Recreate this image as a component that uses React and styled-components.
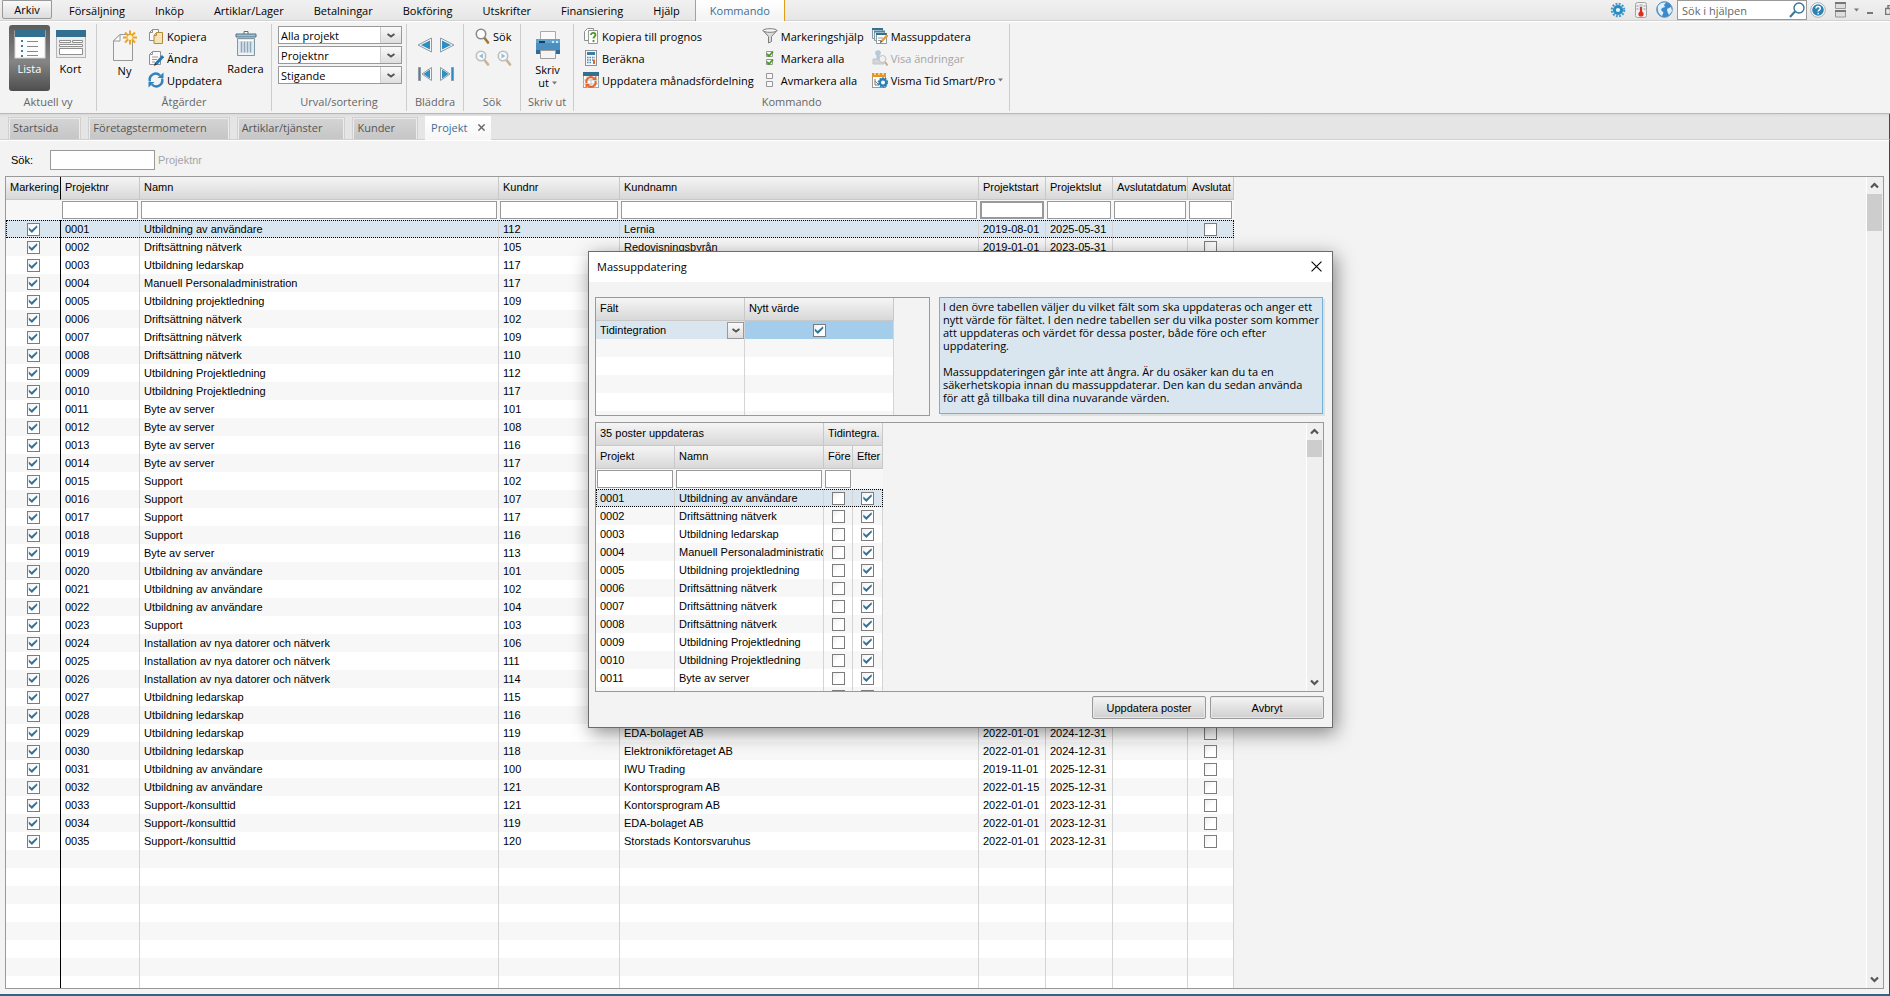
import { useState } from "react";
import styled, { createGlobalStyle, css } from "styled-components";

const uiFont = `"Open Sans", "Noto Sans", sans-serif`;
const gridFont = `"Liberation Sans", Arial, sans-serif`;

const GlobalStyle = createGlobalStyle`
  * {
    box-sizing: border-box;
  }
  body {
    margin: 0;
    background: #f3f3f3;
    color: #000;
    font-family: ${uiFont};
    font-size: 11px;
  }
  button, input, select {
    font: inherit;
    color: inherit;
    margin: 0;
    padding: 0;
    border: 0;
    background: none;
    border-radius: 0;
  }
`;

/* ---------- data ---------- */

const projects = [
  ["0001", "Utbildning av användare", "112", "Lernia", "2019-08-01", "2025-05-31"],
  ["0002", "Driftsättning nätverk", "105", "Redovisningsbyrån", "2019-01-01", "2023-05-31"],
  ["0003", "Utbildning ledarskap", "117"],
  ["0004", "Manuell Personaladministration", "117"],
  ["0005", "Utbildning projektledning", "109"],
  ["0006", "Driftsättning nätverk", "102"],
  ["0007", "Driftsättning nätverk", "109"],
  ["0008", "Driftsättning nätverk", "110"],
  ["0009", "Utbildning Projektledning", "112"],
  ["0010", "Utbildning Projektledning", "117"],
  ["0011", "Byte av server", "101"],
  ["0012", "Byte av server", "108"],
  ["0013", "Byte av server", "116"],
  ["0014", "Byte av server", "117"],
  ["0015", "Support", "102"],
  ["0016", "Support", "107"],
  ["0017", "Support", "117"],
  ["0018", "Support", "116"],
  ["0019", "Byte av server", "113"],
  ["0020", "Utbildning av användare", "101"],
  ["0021", "Utbildning av användare", "102"],
  ["0022", "Utbildning av användare", "104"],
  ["0023", "Support", "103"],
  ["0024", "Installation av nya datorer och nätverk", "106"],
  ["0025", "Installation av nya datorer och nätverk", "111"],
  ["0026", "Installation av nya datorer och nätverk", "114"],
  ["0027", "Utbildning ledarskap", "115"],
  ["0028", "Utbildning ledarskap", "116"],
  ["0029", "Utbildning ledarskap", "119", "EDA-bolaget AB", "2022-01-01", "2024-12-31"],
  ["0030", "Utbildning ledarskap", "118", "Elektronikföretaget AB", "2022-01-01", "2024-12-31"],
  ["0031", "Utbildning av användare", "100", "IWU Trading", "2019-11-01", "2025-12-31"],
  ["0032", "Utbildning av användare", "121", "Kontorsprogram AB", "2022-01-15", "2025-12-31"],
  ["0033", "Support-/konsulttid", "121", "Kontorsprogram AB", "2022-01-01", "2023-12-31"],
  ["0034", "Support-/konsulttid", "119", "EDA-bolaget AB", "2022-01-01", "2023-12-31"],
  ["0035", "Support-/konsulttid", "120", "Storstads Kontorsvaruhus", "2022-01-01", "2023-12-31"],
];

const columns = [
  { title: "Projektnr", width: 79 },
  { title: "Namn", width: 359 },
  { title: "Kundnr", width: 121 },
  { title: "Kundnamn", width: 359 },
  { title: "Projektstart", width: 67, focused: true },
  { title: "Projektslut", width: 67 },
  { title: "Avslutatdatum", width: 75 },
  { title: "Avslutat", width: 46 },
];

const menus = ["Försäljning", "Inköp", "Artiklar/Lager", "Betalningar", "Bokföring", "Utskrifter", "Finansiering", "Hjälp"];
const pages = ["Startsida", "Företagstermometern", "Artiklar/tjänster", "Kunder"];

/* ---------- icons ---------- */

const Svg = styled.svg`
  display: block;
  flex: none;
`;

const ListIcon = () => (
  <Svg width="32" height="29" viewBox="0 0 32 29">
    <rect x="1" y="1" width="30" height="27" fill="#fdfdfd" stroke="#d8d8d8" />
    <rect x="1" y="0" width="30" height="7" fill="#33708f" />
    <path d="M8 10v17" stroke="#3b7fa8" strokeWidth="2" strokeDasharray="2 3" />
    <path d="M13 11.500h11M13 16.500h11M13 21.500h11M13 25.500h11" stroke="#8a8a8a" />
  </Svg>
);

const CardIcon = () => (
  <Svg width="32" height="29" viewBox="0 0 32 29">
    <rect x="1.5" y=".5" width="29" height="27" fill="#ededed" stroke="#b5b5b5" />
    <rect x="1" y="0" width="30" height="7" fill="#33708f" />
    <path d="M4.500 10.500h11v2h-11zM17.500 10.500h10v2h-10zM4.500 14.500h23v2h-23zM4.500 18.500h23v6h-23z" fill="#fff" stroke="#8f8f8f" />
  </Svg>
);

const NewIcon = () => (
  <Svg width="26" height="31" viewBox="0 0 26 31">
    <path d="M8 4.500h12.500v26h-19V11z" fill="#f4f4f4" stroke="#989898" />
    <path d="M8 4.500V11H1.500z" fill="#fff" stroke="#989898" />
    <path d="M18 .5v14M11 7.500h14M13 2.500l10 10M23 2.500l-10 10" stroke="#eea31c" strokeWidth="2" />
    <circle cx="18" cy="7.500" r="2.500" fill="#fff2c8" />
  </Svg>
);

const CopyIcon = () => (
  <Svg width="16" height="16" viewBox="0 0 16 16">
    <path d="M4.500 1.500h6v11h-9v-8z" fill="#fafafa" stroke="#8f8f8f" />
    <path d="M4.500 1.500v3h-3" fill="none" stroke="#8f8f8f" />
    <path d="M8.500 4.500h6v11h-8.500v-8z" fill="#f4e3b4" stroke="#b38b3c" />
    <path d="M8.500 4.500v3H6" fill="none" stroke="#b38b3c" />
  </Svg>
);

const EditIcon = () => (
  <Svg width="16" height="16" viewBox="0 0 16 16">
    <path d="M4.500 1.500h8v13h-11v-10z" fill="#fafafa" stroke="#8f8f8f" />
    <path d="M4.500 1.500v3h-3M4 7h6M4 9.500h5M4 12h3" fill="none" stroke="#9a9a9a" />
    <path d="M15 6l-7 8" stroke="#2379b5" strokeWidth="3" />
    <path d="M6 16l1-3.500 2 2z" fill="#333" />
  </Svg>
);

const RefreshIcon = () => (
  <Svg width="16" height="16" viewBox="0 0 16 16">
    <path d="M2 9.500A6 6 0 0 1 12 3.500M14 6.500A6 6 0 0 1 4 12.500" fill="none" stroke="#2f84bd" strokeWidth="2.400" />
    <path d="M9.500 6h6V.5zM6.500 10h-6v5.500z" fill="#2f84bd" />
  </Svg>
);

const TrashIcon = () => (
  <Svg width="24" height="29" viewBox="0 0 24 29">
    <path d="M10 1.500h4v3h-4z" fill="#fff" stroke="#4c7086" />
    <path d="M3.500 8.500h17v17h-17z" fill="#dfe9f0" stroke="#8097a6" />
    <path d="M2 4h20v3H2z" fill="#a4c0cf" stroke="#4c7086" />
    <path d="M7.500 11.500v11M10.500 11.500v11M13.500 11.500v11M16.500 11.500v11" stroke="#8fa8b8" strokeWidth="1.500" />
    <path d="M5 10.500h14M5 24h14" stroke="#fff" />
  </Svg>
);

const ArrowIcon = ({ flip, stop }) => (
  <Svg width="16" height="16" viewBox="0 0 16 16">
    <g transform={flip ? "translate(16 0) scale(-1 1)" : undefined}>
      {stop && <path d="M1.500 1.500h2v13h-2z" fill="#2d8ec4" stroke="#8d9aa3" />}
      <path d={stop ? "M14.500 1.500v13L5 8z" : "M14.500 1v14L1 8z"} fill="#f5f5f5" stroke="#8d9aa3" />
      <path d={stop ? "M13 3.500v9L6.500 8z" : "M13 3.500v9L4 8z"} fill="#2d8ec4" />
    </g>
  </Svg>
);

const SearchIcon = ({ faded, arrow }) => (
  <Svg width="15" height="16" viewBox="0 0 15 16" opacity={faded ? 0.5 : 1}>
    <path d="M9.500 10l3.500 4.500" stroke="#a47636" strokeWidth="2.600" strokeLinecap="round" />
    <circle cx="6" cy="6" r="4.700" fill="#fff" stroke="#8a8a8a" strokeWidth="1.600" />
    {arrow && <path d={arrow === "left" ? "M8 3.500v5L4 6z" : "M4.500 3.500v5l4-2.500z"} fill="#2d8ec4" />}
  </Svg>
);

const PrinterIcon = () => (
  <Svg width="26" height="30" viewBox="0 0 26 30">
    <path d="M5.500 1.500h15v9h-15z" fill="#fafafa" stroke="#a9a9a9" />
    <path d="M1 9h24v12H1z" fill="#4a8fc0" />
    <path d="M1 9h24v4H1z" fill="#62a3cf" />
    <path d="M1 20h24v4H1z" fill="#2e6d9b" />
    <path d="M4 12h6" stroke="#173e5a" strokeWidth="2" />
    <path d="M17 12h2M21 12h2" stroke="#cfe6f5" strokeWidth="2" />
    <path d="M5.500 20.500h15v8h-15z" fill="#f4f4f4" stroke="#9d9d9d" />
  </Svg>
);

const ForecastIcon = () => (
  <Svg width="16" height="16" viewBox="0 0 16 16">
    <path d="M4.500.5h6v12h-9v-9z" fill="#fafafa" stroke="#8f8f8f" />
    <path d="M5.500 2.500h9v13h-9z" fill="#fff" stroke="#999" />
    <path d="M8 7c0-3 4.500-2.500 4.500 0 0 1.500-2 1.500-2 3.500M10.500 12v2" fill="none" stroke="#4a9a22" strokeWidth="1.800" />
  </Svg>
);

const CalcIcon = () => (
  <Svg width="16" height="16" viewBox="0 0 16 16">
    <rect x="2.500" y=".5" width="11" height="15" fill="#f7f7f7" stroke="#929292" />
    <rect x="4" y="2" width="8" height="3" fill="#3b7fa8" />
    <path d="M4 7.500h8M4 10h8M4 12.500h5" stroke="#4d88ad" strokeWidth="1.500" strokeDasharray="1.500 1" />
    <path d="M11 10v4" stroke="#e8642a" strokeWidth="2" />
  </Svg>
);

const MonthIcon = () => (
  <Svg width="16" height="16" viewBox="0 0 16 16">
    <rect x=".5" y=".5" width="15" height="15" fill="#fff" stroke="#9aa6ae" />
    <path d="M0 0h16v4H0z" fill="#33708f" />
    <path d="M0 8h16M0 12h16M4 4v12M8 4v12M12 4v12" stroke="#b9c4ca" />
    <path d="M3.500 11A4.500 4.500 0 0 1 11 6.500M12.500 9A4.500 4.500 0 0 1 5 13.500" fill="none" stroke="#e8642a" strokeWidth="2" />
    <path d="M9 8h4.500V3.500zM7 12H2.500v4z" fill="#e8642a" />
  </Svg>
);

const FunnelIcon = () => (
  <Svg width="16" height="16" viewBox="0 0 16 16">
    <path d="M1 2.500l5.500 6V15l3-1.500v-5l5.500-6z" fill="#dcdcdc" stroke="#7d7d7d" />
    <ellipse cx="8" cy="2.500" rx="7" ry="1.800" fill="#f6f6f6" stroke="#7d7d7d" />
  </Svg>
);

const BoxesIcon = ({ checked }) => (
  <Svg width="16" height="16" viewBox="0 0 16 16">
    <path d="M4.500 1.500h6v5h-6zM4.500 9.500h6v5h-6z" fill="#f8f8f8" stroke="#979797" />
    {checked && <path d="M5 4l2 2 4-4.500M5 12l2 2 4-4.500" fill="none" stroke="#4a9a22" strokeWidth="1.800" />}
  </Svg>
);

const BatchIcon = () => (
  <Svg width="16" height="16" viewBox="0 0 16 16">
    <path d="M.5 1.500h10v9H.5z" fill="#f0f0f0" stroke="#8a9aa4" />
    <path d="M0 0h11v2H0z" fill="#33708f" />
    <path d="M2.500 3.500h10v9h-10z" fill="#f0f0f0" stroke="#8a9aa4" />
    <path d="M2 2.500h11v2H2z" fill="#4b86a5" />
    <path d="M4.500 5.500h10v10h-10z" fill="#fff" stroke="#8a9aa4" />
    <path d="M4 5h11v2H4z" fill="#33708f" />
    <path d="M6 10h5M6 12.500h4" stroke="#999" />
    <path d="M15.500 7l-6 6.500" stroke="#e99a2b" strokeWidth="2.400" />
    <path d="M8 15l.6-2.500 1.600 1.400z" fill="#333" />
  </Svg>
);

const StampIcon = () => (
  <Svg width="16" height="16" viewBox="0 0 16 16" opacity=".55">
    <circle cx="6" cy="3" r="2.800" fill="#7eaac8" />
    <path d="M4.500 5h3v4h-3z" fill="#7eaac8" />
    <path d="M1 9h11v5H1z" fill="#b9bec2" stroke="#9a9fa3" />
    <circle cx="10.500" cy="9" r="3.500" fill="#eee" stroke="#999" />
    <path d="M13 12l2.500 3.500" stroke="#a47636" strokeWidth="2" />
  </Svg>
);

const TimeIcon = () => (
  <Svg width="16" height="16" viewBox="0 0 16 16">
    <rect x=".5" y="1.500" width="13" height="14" fill="#fff" stroke="#999" />
    <path d="M0 1h14v4H0z" fill="#e8932a" />
    <path d="M3 0v3M7 0v3M11 0v3" stroke="#fff" />
    <path d="M3 7v6h4M3 9l4 4" stroke="#777" fill="none" />
    <circle cx="11" cy="10.500" r="3.200" fill="#fff" stroke="#2b7fb5" strokeWidth="2.400" />
    <circle cx="11" cy="10.500" r="4.600" fill="none" stroke="#2b7fb5" strokeDasharray="1.600 1.300" strokeWidth="1.400" />
  </Svg>
);

const GearIcon = () => (
  <Svg width="16" height="16" viewBox="0 0 16 16">
    <circle cx="8" cy="8" r="6.200" fill="none" stroke="#4a9bc9" strokeWidth="2.200" strokeDasharray="1.900 1.345" />
    <circle cx="8" cy="8" r="3.600" fill="#e9f5fb" stroke="#2b8cc4" strokeWidth="3" />
  </Svg>
);

const ThermometerIcon = () => (
  <Svg width="16" height="16" viewBox="0 0 16 16">
    <rect x="2.500" y=".5" width="11" height="15" rx="2" fill="#f1f1f1" stroke="#a3a3a3" />
    <path d="M8 2v9" stroke="#c9c9c9" strokeWidth="3" />
    <path d="M8 5v7" stroke="#d9301f" strokeWidth="2" />
    <circle cx="8" cy="12" r="2.600" fill="#d9301f" />
    <path d="M3.500 4h2M3.500 7h2M10.500 4h2M10.500 7h2" stroke="#8f8f8f" />
  </Svg>
);

const GlobeIcon = () => (
  <Svg width="17" height="17" viewBox="0 0 17 17">
    <circle cx="8.500" cy="8.500" r="7.800" fill="#3a8ad0" stroke="#5f8fb8" />
    <path d="M2 5c2-3 5-4 8-3.500L8 4l1 2-3 1-1 2 2.500 2.500L6 15C3 13.500 1 10 2 5zM11 8l4-2 1 4-3 4-1.500-3z" fill="#dff0fb" />
  </Svg>
);

const LensIcon = () => (
  <Svg width="16" height="16" viewBox="0 0 16 16">
    <circle cx="10" cy="6" r="5" fill="none" stroke="#37759b" strokeWidth="1.400" />
    <path d="M6 9.500L1 15" stroke="#37759b" strokeWidth="2" />
  </Svg>
);

const HelpIcon = () => (
  <Svg width="16" height="16" viewBox="0 0 16 16">
    <circle cx="8" cy="8" r="7.300" fill="#fff" stroke="#a5b2ba" />
    <circle cx="8" cy="8" r="5.800" fill="#2b83b5" />
    <path d="M6 6.500c0-3 4.300-2.500 4.300 0 0 1.400-2.100 1.300-2.100 3M8.200 10.700v1.500" fill="none" stroke="#fff" strokeWidth="1.500" />
  </Svg>
);

const LayoutIcon = () => (
  <Svg width="11" height="16" viewBox="0 0 11 16">
    <path d="M.5 1v5.500h10V1M.5 9v6h10V9" fill="#dedede" stroke="#999" />
    <path d="M0 1h11M0 9h11" stroke="#777" strokeWidth="2" />
  </Svg>
);

const CaretIcon = () => (
  <Svg width="5" height="4" viewBox="0 0 5 4">
    <path d="M0 .5h5L2.500 3.500z" fill="#777" />
  </Svg>
);

const MinimizeIcon = () => (
  <Svg width="7" height="10" viewBox="0 0 7 10">
    <path d="M0 8h6" stroke="#777" strokeWidth="2" />
  </Svg>
);

const RestoreIcon = () => (
  <Svg width="9" height="10" viewBox="0 0 9 10">
    <path d="M3 3V.5h5.500v6H6M.5 3.500h5v6h-5z" fill="none" stroke="#777" strokeWidth="1.500" />
  </Svg>
);

const ChevronIcon = ({ up }) => (
  <Svg width="9" height="7" viewBox="0 0 9 7">
    <path d={up ? "M1 5.500l3.500-3.500L8 5.500" : "M1 1.500L4.500 5 8 1.500"} fill="none" stroke="#555" strokeWidth="2.200" />
  </Svg>
);

const SmallChevron = () => (
  <Svg width="8" height="5" viewBox="0 0 8 5">
    <path d="M.5 1L4 3.500 7.500 1" fill="none" stroke="#555" strokeWidth="1.900" />
  </Svg>
);

const CrossIcon = ({ size, color, weight = 1 }) => (
  <Svg width={size} height={size} viewBox="0 0 10 10">
    <path d="M.5.5l9 9M9.500.5l-9 9" stroke={color} strokeWidth={weight} />
  </Svg>
);

/* ---------- menu bar ---------- */

const Window = styled.div`
  display: flex;
  flex-direction: column;
  height: 100vh;
  overflow: hidden;
`;

const MenuBar = styled.nav`
  display: flex;
  height: 21px;
  flex: none;
  background: linear-gradient(#f1f1f1, #e6e6e6);
  border-bottom: 1px solid #d2d2d2;
`;

const FileButton = styled.button`
  width: 50px;
  height: 19px;
  margin: 0 2px;
  border: 1px solid #999;
  border-radius: 0 0 2px 2px;
  background: linear-gradient(#fafafa, #dcdcdc);
  line-height: 15px;
`;

const MenuItem = styled.button`
  height: 21px;
  padding: 0 15px;
  line-height: 20px;
  ${(p) =>
    p.$active &&
    css`
      padding: 0 14px;
      color: #3c6e96;
      background: linear-gradient(#fff, #f3f3f3);
      border: solid #e09b1a;
      border-width: 0 1px;
    `}
`;

const Tools = styled.div`
  display: flex;
  align-items: flex-start;
  gap: 7px;
  margin: 0 -7px 0 auto;
  padding-top: 1px;
`;

const ToolButton = styled.button`
  display: grid;
  place-items: center;
  width: ${(p) => p.$width || 16}px;
  height: 17px;
`;

const HelpSearch = styled.label`
  display: flex;
  align-items: center;
  width: 130px;
  height: 20px;
  margin: -1px -4px 0 -2px;
  padding: 0 1px 0 4px;
  border: 1px solid #999;
  background: #fff;

  input {
    flex: 1;
    min-width: 0;
    outline: 0;
  }
  input::placeholder {
    color: #666;
    opacity: 1;
  }
`;

/* ---------- ribbon ---------- */

const Ribbon = styled.header`
  display: flex;
  flex: none;
  padding: 2px 0;
  border-top: 1px solid #fff;
  border-bottom: 1px solid #b4b8b8;
`;

const Group = styled.section`
  display: flex;
  flex-direction: column;
  border-right: 1px solid #ccc;
`;

const GroupBody = styled.div`
  display: flex;
  gap: ${(p) => p.$gap || 0}px;
  height: 69px;
  padding: ${(p) => p.$pad};
`;

const GroupLabel = styled.div`
  height: 18px;
  line-height: 18px;
  text-align: center;
  color: #666;
`;

const BigButton = styled.button`
  display: flex;
  flex-direction: column;
  align-items: center;
  gap: 3px;
  width: 41px;
  height: 66px;
  padding-top: 5px;
  line-height: 14px;
  border-radius: 3px;
  ${(p) =>
    p.$active &&
    css`
      color: #fff;
      background: linear-gradient(#5c5c5c, #858585 55%, #4e4e4e);
    `}
`;

const BigLabel = styled.span`
  display: flex;
  align-items: center;
  justify-content: center;
  gap: 3px;
  line-height: 12px;
`;

const Commands = styled.div`
  display: flex;
  flex-direction: column;
  align-items: flex-start;
`;

const Command = styled.button`
  display: flex;
  align-items: center;
  gap: 3px;
  height: 22px;
  white-space: nowrap;

  &:disabled {
    color: #a5a5a5;
  }
`;

const CommandRow = styled.div`
  display: flex;
  gap: 7px;
`;

const NavGrid = styled.div`
  display: grid;
  grid-template-columns: 22px 22px;
  grid-template-rows: 29px 29px;
  place-items: center;
`;

const Combos = styled.div`
  display: grid;
  gap: 2px;
  align-content: start;
`;

const ComboBox = styled.div`
  display: grid;
  grid-template-columns: 1fr 21px;
  width: 124px;
  height: 18px;
  border: 1px solid #999;
  background: #fff;

  select {
    grid-area: 1 / 1 / 2 / 3;
    appearance: none;
    padding-left: 2px;
    line-height: 15px;
    outline: 0;
  }
`;

const ComboArrow = styled.span`
  grid-area: 1 / 2;
  display: grid;
  place-items: center;
  border-left: 1px solid #ccc;
  background: linear-gradient(#fafafa, #dedede);
  pointer-events: none;
`;

const Combo = ({ label, value }) => (
  <ComboBox>
    <select aria-label={label} defaultValue={value}>
      <option>{value}</option>
    </select>
    <ComboArrow>
      <SmallChevron />
    </ComboArrow>
  </ComboBox>
);

/* ---------- page tabs ---------- */

const TabStrip = styled.div`
  display: flex;
  align-items: flex-end;
  gap: 7px;
  flex: none;
  height: 26px;
  padding-left: 8px;
  background: linear-gradient(#d9dada, #e5e5e5 3px);
  border-bottom: 1px solid #d0d0d0;
  border-right: 1px solid #2e4f63;
`;

const Tab = styled.button`
  height: 22px;
  padding: 0 22px 2px 4px;
  color: #555;
  text-align: left;
  border: 1px solid #d0d0d0;
  border-bottom: 0;
  box-shadow: inset 1px 1px #ececec, inset -1px 0 #ececec;
  background: linear-gradient(#d4d4d4, #c6c6c6);
`;

const ActiveTab = styled.div`
  display: flex;
  align-items: center;
  gap: 11px;
  height: 24px;
  margin: 0 0 -1px;
  padding: 0 6px 2px;
  color: #3c6e96;
  background: linear-gradient(#fff, #f6f6f6);
`;

/* ---------- grids ---------- */

const Page = styled.main`
  display: flex;
  flex-direction: column;
  flex: 1;
  min-height: 0;
  padding: 0 5px 5px;
  border: solid #2e4f63;
  border-width: 0 1px 2px 0;
  border-bottom-color: #2f6585;
  font-family: ${gridFont};
  box-shadow: inset 0 1px #fff;
`;

const SearchRow = styled.div`
  display: flex;
  align-items: center;
  padding: 10px 0 6px 6px;

  label {
    width: 39px;
  }
  input {
    width: 105px;
    height: 20px;
    margin-right: 3px;
    border: 1px solid #999;
    background: #fff;
  }
  span {
    color: #a5a5a5;
  }
`;

const Frame = styled.div`
  display: flex;
  justify-content: space-between;
  align-items: flex-start;
  overflow: hidden;
  border: 1px solid #999;
  ${(p) => (p.$height ? `height: ${p.$height}px;` : "flex: 1;")}
  ${(p) => p.$width && `width: ${p.$width}px;`}
`;

const Grid = styled.table`
  width: ${(p) => p.$width}px;
  table-layout: fixed;
  border-spacing: 0;
  font-family: ${gridFont};
  background: #fff;

  th,
  td {
    padding: 0 4px;
    overflow: hidden;
    white-space: nowrap;
    text-align: left;
    font-weight: normal;
    border-right: 1px solid #d4d4d4;
  }
  th {
    height: 23px;
    padding: 0 0 3px 4px;
    border-color: #c8c8c8;
    border-bottom: 1px solid #c8c8c8;
    background: linear-gradient(#f5f5f5, #d8d8d8);
  }
  td {
    height: 18px;
    line-height: 16px;
  }
  ${(p) =>
    p.$marked &&
    css`
      th:first-child,
      td:first-child {
        border-right-color: #000;
      }
    `}
`;

const Row = styled.tr`
  background: ${(p) => (p.$selected ? "#dae6ef" : p.$odd ? "#f7f7f7" : "#fff")};
  ${(p) =>
    p.$dotted &&
    css`
      outline: 1px dotted #000;
      outline-offset: -1px;
    `}
`;

const FilterRow = styled.tr`
  background: #f7f7f7;

  && td {
    height: 20px;
    padding: 0 1px;
    border-color: #f7f7f7;
  }
`;

const FilterInput = styled.input`
  display: block;
  width: 100%;
  height: 18px;
  border: ${(p) => (p.$focused ? 2 : 1)}px solid #999;
  background: #fff;
`;

const Check = styled.input.attrs({ type: "checkbox" })`
  appearance: none;
  display: block;
  width: 13px;
  height: 13px;
  margin: 0 auto;
  border: 1px solid #7c7c7c;
  background: linear-gradient(135deg, #eee, #fff 50%);

  &:checked::after {
    content: "";
    display: block;
    width: 11px;
    height: 11px;
    background: #35749a;
    clip-path: polygon(12% 36%, 38% 60%, 86% 16%, 90% 34%, 40% 86%, 12% 58%);
  }
`;

const ValueCell = styled.td`
  background: #a3cdeb;
`;

const FieldSelect = styled.div`
  display: grid;
  grid-template-columns: 1fr 17px;
  height: 17px;
  margin-right: -4px;

  select {
    grid-area: 1 / 1 / 2 / 3;
    appearance: none;
    outline: 0;
  }
`;

const FieldArrow = styled(ComboArrow)`
  border: 1px solid #999;
`;

const ScrollBar = styled.div`
  display: flex;
  flex-direction: column;
  align-self: stretch;
  flex: none;
  width: 17px;
  border-left: 1px solid #fff;
  background: #efefef;

  button {
    display: grid;
    place-items: center;
    width: 15px;
    height: 17px;
  }
  button:last-child {
    margin-top: auto;
  }
`;

const Thumb = styled.div`
  width: 15px;
  height: ${(p) => p.$size}px;
  background: #cdcdcd;
`;

const Scroll = ({ size }) => (
  <ScrollBar>
    <button aria-label="Rulla upp">
      <ChevronIcon up />
    </button>
    <Thumb $size={size} />
    <button aria-label="Rulla ned">
      <ChevronIcon />
    </button>
  </ScrollBar>
);

/* ---------- dialog ---------- */

const Dialog = styled.div`
  position: absolute;
  left: 588px;
  top: 251px;
  width: 745px;
  border: 1px solid #6c6c6c;
  background: #f3f3f3;
  box-shadow: 3px 5px 18px rgba(0, 0, 0, 0.45);
`;

const TitleBar = styled.div`
  display: flex;
  align-items: center;
  justify-content: space-between;
  height: 30px;
  padding: 0 10px 2px 8px;
  background: #fff;
`;

const DialogBody = styled.div`
  display: flex;
  flex-direction: column;
  padding: 15px 8px 8px 6px;
`;

const Top = styled.div`
  display: flex;
  align-items: flex-start;
  gap: 9px;
  margin-bottom: 6px;
`;

const Info = styled.p`
  flex: 1;
  height: 117px;
  margin: 0 1px 0 0;
  padding: 2px 3px;
  border: 1px solid #6fb2de;
  background: #dae6ef;
  box-shadow: 2px 2px #e0e0e0;
  line-height: 13px;
  white-space: pre;
`;

const Footer = styled.div`
  display: flex;
  justify-content: flex-end;
  gap: 4px;
  margin-top: 4px;
`;

const PushButton = styled.button`
  width: 114px;
  height: 23px;
  border: 1px solid #999;
  border-radius: 2px;
  background: linear-gradient(#f5f5f5, #cfcfcf);
  box-shadow: inset 0 0 0 1px #e8e8e8;
  font-family: ${gridFont};
`;

const info = `I den övre tabellen väljer du vilket fält som ska uppdateras och anger ett
nytt värde för fältet. I den nedre tabellen ser du vilka poster som kommer
att uppdateras och värdet för dessa poster, både före och efter
uppdatering.

Massuppdateringen går inte att ångra. Är du osäker kan du ta en
säkerhetskopia innan du massuppdaterar. Den kan du sedan använda
för att gå tillbaka till dina nuvarande värden.`;

const MassUpdate = ({ onClose }) => (
  <Dialog role="dialog" aria-label="Massuppdatering">
    <TitleBar>
      <span>Massuppdatering</span>
      <button aria-label="Stäng" onClick={onClose}>
        <CrossIcon size="11" color="#000" />
      </button>
    </TitleBar>
    <DialogBody>
      <Top>
        <Frame $height={119} $width={335}>
          <Grid $width={298}>
            <thead>
              <tr>
                <th>Fält</th>
                <th>Nytt värde</th>
              </tr>
            </thead>
            <tbody>
              <Row $selected>
                <td>
                  <FieldSelect>
                    <select aria-label="Fält" defaultValue="Tidintegration">
                      <option>Tidintegration</option>
                    </select>
                    <FieldArrow>
                      <SmallChevron />
                    </FieldArrow>
                  </FieldSelect>
                </td>
                <ValueCell>
                  <Check defaultChecked aria-label="Nytt värde" />
                </ValueCell>
              </Row>
              {[1, 2, 3, 4, 5].map((n) => (
                <Row key={n} $odd={n % 2 === 1}>
                  <td />
                  <td />
                </Row>
              ))}
            </tbody>
          </Grid>
        </Frame>
        <Info>{info}</Info>
      </Top>
      <Frame $height={270}>
        <Grid $width={287}>
          <colgroup>
            <col width="79" />
            <col width="149" />
            <col width="29" />
            <col width="30" />
          </colgroup>
          <thead>
            <tr>
              <th colSpan="2">35 poster uppdateras</th>
              <th colSpan="2">Tidintegra.</th>
            </tr>
            <tr>
              <th>Projekt</th>
              <th>Namn</th>
              <th>Före</th>
              <th>Efter</th>
            </tr>
          </thead>
          <tbody>
            <FilterRow>
              <td><FilterInput aria-label="Filtrera Projekt" /></td>
              <td><FilterInput aria-label="Filtrera Namn" /></td>
              <td><FilterInput aria-label="Filtrera Före" /></td>
              <td />
            </FilterRow>
            {projects.slice(0, 12).map(([nr, name], i) => (
              <Row key={nr} $selected={i === 0} $dotted={i === 0} $odd={i % 2 === 1}>
                <td>{nr}</td>
                <td>{name}</td>
                <td><Check aria-label={`Före ${nr}`} /></td>
                <td><Check defaultChecked aria-label={`Efter ${nr}`} /></td>
              </Row>
            ))}
          </tbody>
        </Grid>
        <Scroll size={17} />
      </Frame>
      <Footer>
        <PushButton>Uppdatera poster</PushButton>
        <PushButton onClick={onClose}>Avbryt</PushButton>
      </Footer>
    </DialogBody>
  </Dialog>
);

const App = () => {
  const [open, setOpen] = useState(true);

  return (
    <Window>
      <GlobalStyle />
      <MenuBar>
        <FileButton>Arkiv</FileButton>
        {menus.map((m) => (
          <MenuItem key={m}>{m}</MenuItem>
        ))}
        <MenuItem $active>Kommando</MenuItem>
        <Tools>
          <ToolButton aria-label="Inställningar"><GearIcon /></ToolButton>
          <ToolButton aria-label="Företagstermometer"><ThermometerIcon /></ToolButton>
          <ToolButton aria-label="Webb"><GlobeIcon /></ToolButton>
          <HelpSearch>
            <input placeholder="Sök i hjälpen" aria-label="Sök i hjälpen" />
            <LensIcon />
          </HelpSearch>
          <ToolButton aria-label="Hjälp"><HelpIcon /></ToolButton>
          <ToolButton $width={14} aria-label="Layout"><LayoutIcon /></ToolButton>
          <ToolButton $width={5} aria-label="Visa fler"><CaretIcon /></ToolButton>
          <ToolButton $width={9} aria-label="Minimera"><MinimizeIcon /></ToolButton>
          <ToolButton $width={15} aria-label="Återställ"><RestoreIcon /></ToolButton>
        </Tools>
      </MenuBar>

      <Ribbon>
        <Group>
          <GroupBody $pad="1px 5px 0 9px">
            <BigButton $active><ListIcon />Lista</BigButton>
            <BigButton><CardIcon />Kort</BigButton>
          </GroupBody>
          <GroupLabel>Aktuell vy</GroupLabel>
        </Group>
        <Group>
          <GroupBody $gap={3} $pad="1px 5px 0 7px">
            <BigButton><NewIcon />Ny</BigButton>
            <Commands>
              <Command><CopyIcon />Kopiera</Command>
              <Command><EditIcon />Ändra</Command>
              <Command><RefreshIcon />Uppdatera</Command>
            </Commands>
            <BigButton><TrashIcon />Radera</BigButton>
          </GroupBody>
          <GroupLabel>Åtgärder</GroupLabel>
        </Group>
        <Group>
          <GroupBody $pad="2px 4px 0 6px">
            <Combos>
              <Combo label="Urval" value="Alla projekt" />
              <Combo label="Sorteringsfält" value="Projektnr" />
              <Combo label="Sorteringsordning" value="Stigande" />
            </Combos>
          </GroupBody>
          <GroupLabel>Urval/sortering</GroupLabel>
        </Group>
        <Group>
          <GroupBody $pad="6px 5px 0 7px">
            <NavGrid>
              <button aria-label="Föregående"><ArrowIcon /></button>
              <button aria-label="Nästa"><ArrowIcon flip /></button>
              <button aria-label="Första"><ArrowIcon stop /></button>
              <button aria-label="Sista"><ArrowIcon stop flip /></button>
            </NavGrid>
          </GroupBody>
          <GroupLabel>Bläddra</GroupLabel>
        </Group>
        <Group>
          <GroupBody $pad="1px 8px 0 11px">
            <Commands>
              <Command><SearchIcon />Sök</Command>
              <CommandRow>
                <Command disabled aria-label="Sök föregående"><SearchIcon faded arrow="left" /></Command>
                <Command disabled aria-label="Sök nästa"><SearchIcon faded arrow="right" /></Command>
              </CommandRow>
            </Commands>
          </GroupBody>
          <GroupLabel>Sök</GroupLabel>
        </Group>
        <Group>
          <GroupBody $pad="1px 5px 0 6px">
            <BigButton>
              <PrinterIcon />
              <span>
                Skriv
                <BigLabel>ut <CaretIcon /></BigLabel>
              </span>
            </BigButton>
          </GroupBody>
          <GroupLabel>Skriv ut</GroupLabel>
        </Group>
        <Group>
          <GroupBody $gap={8} $pad="1px 6px 0 9px">
            <Commands>
              <Command><ForecastIcon />Kopiera till prognos</Command>
              <Command><CalcIcon />Beräkna</Command>
              <Command><MonthIcon />Uppdatera månadsfördelning</Command>
            </Commands>
            <Commands>
              <Command><FunnelIcon />Markeringshjälp</Command>
              <Command><BoxesIcon checked />Markera alla</Command>
              <Command><BoxesIcon />Avmarkera alla</Command>
            </Commands>
            <Commands>
              <Command onClick={() => setOpen(true)}><BatchIcon />Massuppdatera</Command>
              <Command disabled><StampIcon />Visa ändringar</Command>
              <Command><TimeIcon />Visma Tid Smart/Pro <CaretIcon /></Command>
            </Commands>
          </GroupBody>
          <GroupLabel>Kommando</GroupLabel>
        </Group>
      </Ribbon>

      <TabStrip>
        {pages.map((p) => (
          <Tab key={p}>{p}</Tab>
        ))}
        <ActiveTab>
          <button>Projekt</button>
          <button aria-label="Stäng fliken"><CrossIcon size="7" color="#666" weight={2} /></button>
        </ActiveTab>
      </TabStrip>

      <Page>
        <SearchRow>
          <label htmlFor="search">Sök:</label>
          <input id="search" />
          <span>Projektnr</span>
        </SearchRow>
        <Frame>
          <Grid $width={1228} $marked>
            <colgroup>
              <col width="55" />
              {columns.map((c) => (
                <col key={c.title} width={c.width} />
              ))}
            </colgroup>
            <thead>
              <tr>
                <th>Markering</th>
                {columns.map((c) => (
                  <th key={c.title}>{c.title}</th>
                ))}
              </tr>
            </thead>
            <tbody>
              <FilterRow>
                <td />
                {columns.map((c) => (
                  <td key={c.title}>
                    <FilterInput $focused={c.focused} aria-label={`Filtrera ${c.title}`} />
                  </td>
                ))}
              </FilterRow>
              {projects.map(([nr, name, customer, customerName, start, end], i) => (
                <Row key={nr} $selected={i === 0} $dotted={i === 0} $odd={i % 2 === 1}>
                  <td><Check defaultChecked aria-label={`Markera ${nr}`} /></td>
                  <td>{nr}</td>
                  <td>{name}</td>
                  <td>{customer}</td>
                  <td>{customerName}</td>
                  <td>{start}</td>
                  <td>{end}</td>
                  <td />
                  <td><Check aria-label={`Avslutat ${nr}`} /></td>
                </Row>
              ))}
              {Array.from({ length: 8 }, (_, i) => (
                <Row key={i} $odd={i % 2 === 0}>
                  <td />
                  {columns.map((c) => (
                    <td key={c.title} />
                  ))}
                </Row>
              ))}
            </tbody>
          </Grid>
          <Scroll size={37} />
        </Frame>
      </Page>

      {open && <MassUpdate onClose={() => setOpen(false)} />}
    </Window>
  );
};

export default App;
